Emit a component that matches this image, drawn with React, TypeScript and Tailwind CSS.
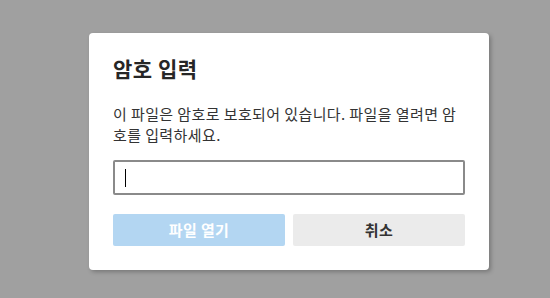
export default function App() {
    return (
        <div
            className="w-[550px] h-[298px] bg-[#a0a0a0] flex items-start pt-[33px] pl-[89px]"
            style={{ fontFamily: '"Noto Sans CJK KR", "Noto Sans", sans-serif' }}
        >
            {/* dialog */}
            <div className="w-[400px] bg-white rounded-[4px] shadow-[2px_2px_4px_rgba(0,0,0,0.25)] px-6 pt-6 pb-6 text-[#262626]">
                <h1 className="text-[21px] leading-[22px] font-bold tracking-[0.5px]">
                    암호 입력
                </h1>

                <p className="mt-[24px] text-[15px] leading-[21px] tracking-[0.4px] text-[#333] break-all">
                    이 파일은 암호로 보호되어 있습니다. 파일을 열려면 암호를 입력하세요.
                </p>

                <div className="mt-[15px] h-[35px] border-2 border-[#8a8a8a] rounded-[2px] flex items-center pl-[10px]">
                    <span className="w-px h-[18px] bg-black" />
                </div>

                <div className="mt-[19px] grid grid-cols-2 gap-2">
                    <button className="h-8 rounded-[2px] bg-[#b3d6f2] text-white text-[15px] font-bold tracking-[0.4px]">
                        파일 열기
                    </button>
                    <button className="h-8 rounded-[2px] bg-[#ebebeb] text-[#333] text-[15px] font-bold tracking-[0.4px]">
                        취소
                    </button>
                </div>
            </div>
        </div>
    )
}
